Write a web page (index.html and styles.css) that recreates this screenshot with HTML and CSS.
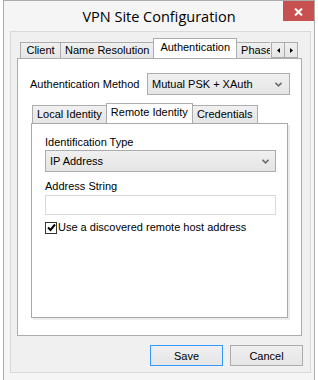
FILE: index.html
```html
<!DOCTYPE html>
<html lang="en">
<head>
  <meta charset="UTF-8">
  <meta name="viewport" content="width=device-width, initial-scale=1.0">
  <title>VPN Site Configuration</title>
  <link rel="stylesheet" href="styles.css">
</head>
<body>
  <div class="window">
    <div class="titlebar">
      <span></span>
      <div class="title">VPN Site Configuration</div>
      <div class="close">
        <svg width="9" height="8" viewBox="0 0 9 8"><path d="M1 0.5 L8 7.5 M8 0.5 L1 7.5" stroke="#fff" stroke-width="2"/></svg>
      </div>
    </div>

    <div class="client">
      <div class="tabctl main-tabs">
        <div class="tabstrip">
          <div class="tab-list">
            <div class="tab">Client</div>
            <div class="tab">Name Resolution</div>
            <div class="tab active">Authentication</div>
            <div class="tab">Phase 1</div>
          </div>
          <div class="scroller">
            <div class="arrow"><svg width="3" height="5" viewBox="0 0 3 5"><path d="M3 0 L0 2.5 L3 5 Z" fill="#000"/></svg></div>
            <div class="arrow"><svg width="3" height="5" viewBox="0 0 3 5"><path d="M0 0 L3 2.5 L0 5 Z" fill="#000"/></svg></div>
          </div>
        </div>

        <div class="panel">
          <div class="method-row">
            <label>Authentication Method</label>
            <div class="combo method">
              <span>Mutual PSK + XAuth</span>
              <svg width="7" height="5" viewBox="0 0 7 5"><path d="M0.5 0.8 L3.5 3.8 L6.5 0.8" fill="none" stroke="#6d6d6d" stroke-width="1.6"/></svg>
            </div>
          </div>

          <div class="tabctl sub-tabs">
            <div class="tabstrip">
              <div class="tab-list">
                <div class="tab">Local Identity</div>
                <div class="tab active">Remote Identity</div>
                <div class="tab">Credentials</div>
              </div>
            </div>

            <div class="panel sub-panel">
              <label class="field-label">Identification Type</label>
              <div class="combo field">
                <span>IP Address</span>
                <svg width="7" height="5" viewBox="0 0 7 5"><path d="M0.5 0.8 L3.5 3.8 L6.5 0.8" fill="none" stroke="#6d6d6d" stroke-width="1.6"/></svg>
              </div>

              <label class="field-label second">Address String</label>
              <div class="textbox"></div>

              <div class="check-row">
                <span class="checkbox">
                  <svg width="9" height="9" viewBox="0 0 9 9"><path d="M1 4.5 L3.5 7 L8 1.5" fill="none" stroke="#000" stroke-width="2"/></svg>
                </span>
                <span>Use a discovered remote host address</span>
              </div>
            </div>
          </div>
        </div>
      </div>

      <div class="buttons">
        <button class="btn default">Save</button>
        <button class="btn">Cancel</button>
      </div>
    </div>
  </div>
</body>
</html>
```

FILE: styles.css
```css
* {
  margin: 0;
  padding: 0;
  box-sizing: border-box;
}

body {
  width: 318px;
  height: 380px;
  overflow: hidden;
  background: #fff;
  font-family: "Liberation Sans", Arial, sans-serif;
  font-size: 11px;
  color: #000;
}

.window {
  margin-left: 3px;
  width: 312px;
  height: 382px;
  border: 1px solid #ababab;
  background: #f5f5f5;
}

/* title bar */

.titlebar {
  height: 30px;
  display: grid;
  grid-template-columns: 34px 1fr 34px;
}

.title {
  text-align: center;
  font-family: "Open Sans", sans-serif;
  font-size: 14.5px;
  line-height: 31px;
  color: #000;
}

.close {
  width: 31px;
  height: 20px;
  margin-left: auto;
  background: #c75050;
  display: flex;
  align-items: center;
  justify-content: center;
  padding-top: 2px;
}

/* dialog client area */

.client {
  margin: 0 3px 0 6px;
  height: 342px;
  border: 1px solid #d9d9d9;
  background: #f0f0f0;
  padding: 6px 7px 0 6px;
}

.tabctl.main-tabs {
  margin-right: 1px;
}

.tabstrip {
  display: flex;
  align-items: flex-end;
  height: 20px;
}

.tab-list {
  display: flex;
  align-items: flex-end;
  flex: 1;
  overflow: hidden;
  height: 100%;
  padding-left: 3px;
}

.tab {
  flex: none;
  min-width: 41px;
  height: 16px;
  padding: 1px 4px 0;
  line-height: 13px;
  text-align: center;
  border: 1px solid #acacac;
  border-bottom: none;
  margin-right: -1px;
  background: linear-gradient(#f0f0f0, #e5e5e5);
  white-space: nowrap;
}

.tab.active {
  position: relative;
  z-index: 1;
  height: 21px;
  margin-bottom: -1px;
  padding: 2px 6px 0;
  background: #fff;
}

.scroller {
  display: flex;
  margin: 0 4px 0 1px;
  align-self: flex-end;
}

.arrow {
  width: 14px;
  height: 16px;
  border: 1px solid #acacac;
  background: linear-gradient(#f0f0f0, #e5e5e5);
  display: flex;
  align-items: center;
  justify-content: center;
}

.arrow + .arrow {
  margin-left: -1px;
}

.panel {
  background: #fff;
  border: 1px solid #acacac;
  height: 278px;
  padding: 14px 11px 0 12px;
}

.method-row {
  display: flex;
  align-items: center;
  justify-content: space-between;
}

.combo {
  display: flex;
  align-items: center;
  justify-content: space-between;
  border: 1px solid #acacac;
  background: linear-gradient(#f0f0f0, #e5e5e5);
  padding: 0 7px 0 4px;
}

.combo.method {
  width: 143px;
  height: 22px;
}

/* inner tabs */

.tabctl.sub-tabs {
  margin: 8px -1px 0 1px;
  width: 257px;
}

.sub-tabs .tab-list {
  padding-left: 1px;
}

.sub-tabs .tab {
  height: 18px;
  padding: 2px 4px 0;
}

.sub-tabs .tab.active {
  height: 21px;
  padding: 2px 4px 0;
}

.panel.sub-panel {
  height: 195px;
  padding: 12px 11px 0 13px;
  border-color: #a9a9a9;
  box-shadow: 2px 2px 0 #ececec;
  display: flex;
  flex-direction: column;
}

.field-label {
  line-height: 13px;
  margin-bottom: 1px;
}

.field-label.second {
  margin-top: 8px;
  margin-bottom: 2px;
}

.combo.field {
  height: 22px;
  padding-right: 6px;
}

.textbox {
  height: 20px;
  border: 1px solid #d9d9d9;
  background: #fff;
}

.check-row {
  display: flex;
  align-items: center;
  gap: 1px;
  margin-top: 6px;
  line-height: 13px;
}

.checkbox {
  width: 12px;
  height: 12px;
  border: 1px solid #333;
  background: #fff;
  display: flex;
  align-items: center;
  justify-content: center;
}

/* bottom buttons */

.buttons {
  display: flex;
  justify-content: flex-end;
  gap: 7px;
  margin-top: 9px;
}

.btn {
  width: 73px;
  height: 21px;
  border: 1px solid #acacac;
  background: linear-gradient(#f0f0f0, #e5e5e5);
  font-family: "Liberation Sans", Arial, sans-serif;
  font-size: 11px;
  color: #000;
}

.btn.default {
  border-color: #3399ff;
}
```
